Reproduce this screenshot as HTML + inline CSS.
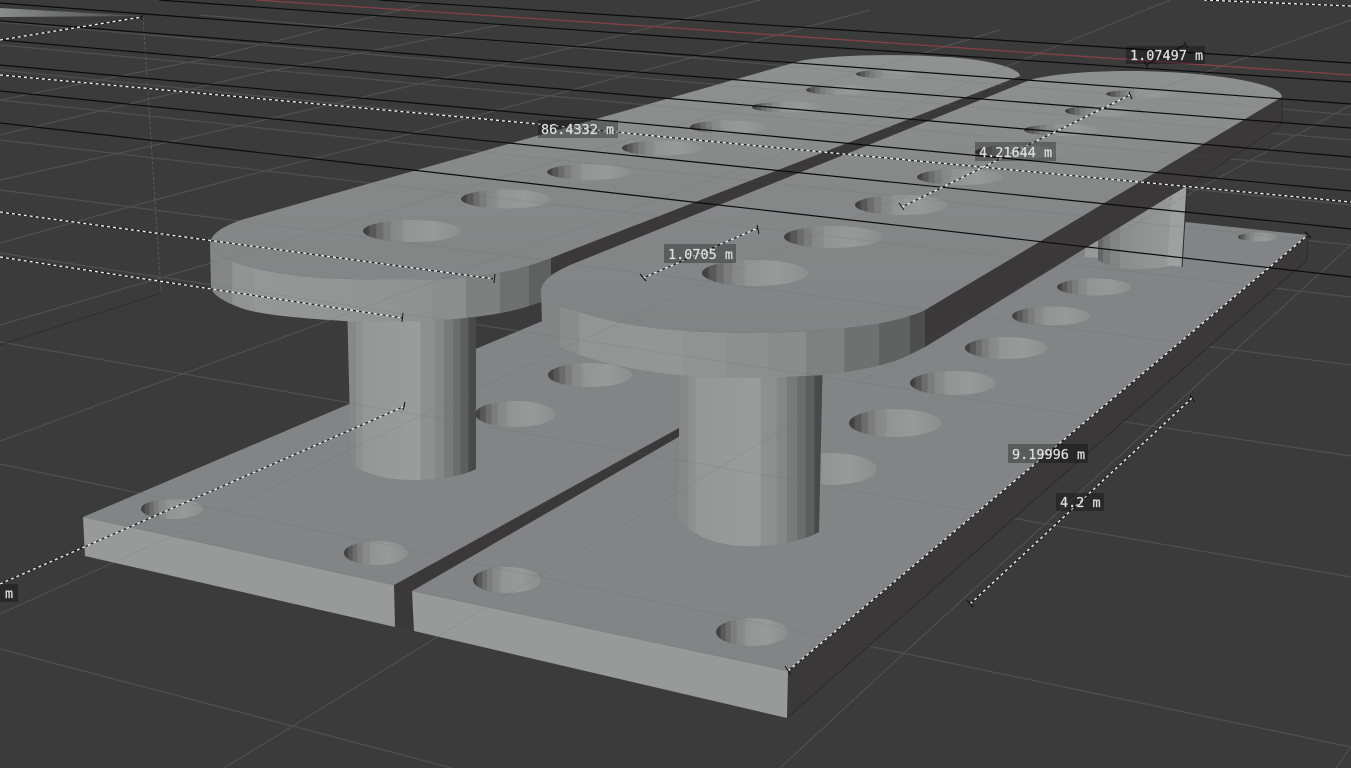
<!DOCTYPE html>
<html><head><meta charset="utf-8"><title>Viewport</title>
<style>html,body{margin:0;padding:0;background:#3b3b3b;width:1351px;height:768px;overflow:hidden}svg{display:block;filter:blur(.35px)}
text{font-family:"DejaVu Sans Mono","Liberation Mono",monospace;font-size:13.5px;fill:#dedede;stroke:#dedede;stroke-width:.25}</style></head>
<body>
<svg width="1351" height="768" viewBox="0 0 1351 768" xmlns="http://www.w3.org/2000/svg">
<defs>
<linearGradient id="hole" x1="0" x2="1" y1="0" y2="0">
<stop offset="0" stop-color="#3c3c3c"/><stop offset=".06" stop-color="#464646"/><stop offset=".07" stop-color="#585858"/><stop offset=".13" stop-color="#585858"/><stop offset=".14" stop-color="#6c6c6c"/><stop offset=".2" stop-color="#6c6c6c"/><stop offset=".21" stop-color="#7b7c7c"/><stop offset=".28" stop-color="#7b7c7c"/><stop offset=".29" stop-color="#868888"/><stop offset=".4" stop-color="#8a8c8c"/><stop offset=".41" stop-color="#929494"/><stop offset=".7" stop-color="#989a9a"/><stop offset="1" stop-color="#8d8f8f"/>
</linearGradient>
<linearGradient id="cyl" x1="0" x2="1" y1="0" y2="0">
<stop offset="0" stop-color="#868888"/><stop offset=".07" stop-color="#868888"/><stop offset=".071" stop-color="#8e9090"/><stop offset=".12" stop-color="#8e9090"/><stop offset=".121" stop-color="#959797"/><stop offset=".5" stop-color="#9a9c9c"/><stop offset=".57" stop-color="#9a9c9c"/><stop offset=".571" stop-color="#8e9090"/><stop offset=".68" stop-color="#8e9090"/><stop offset=".681" stop-color="#858787"/><stop offset=".75" stop-color="#858787"/><stop offset=".751" stop-color="#787a7a"/><stop offset=".82" stop-color="#787a7a"/><stop offset=".821" stop-color="#6c6d6d"/><stop offset=".88" stop-color="#6c6d6d"/><stop offset=".881" stop-color="#5d5e5e"/><stop offset=".94" stop-color="#5d5e5e"/><stop offset=".941" stop-color="#484949"/><stop offset="1" stop-color="#484949"/>
</linearGradient>
<linearGradient id="cylFar" x1="0" x2="1" y1="0" y2="0">
<stop offset="0" stop-color="#646565"/><stop offset=".07" stop-color="#646565"/><stop offset=".071" stop-color="#767777"/><stop offset=".16" stop-color="#767777"/><stop offset=".161" stop-color="#828484"/><stop offset=".3" stop-color="#828484"/><stop offset=".301" stop-color="#8b8d8d"/><stop offset=".7" stop-color="#929494"/><stop offset="1" stop-color="#979999"/>
</linearGradient>
<linearGradient id="sideL" gradientUnits="userSpaceOnUse" x1="210" x2="551" y1="0" y2="0">
<stop offset="0" stop-color="#858787"/><stop offset=".065" stop-color="#858787"/><stop offset=".066" stop-color="#929494"/><stop offset=".13" stop-color="#929494"/><stop offset=".131" stop-color="#959797"/><stop offset=".5" stop-color="#929494"/><stop offset=".65" stop-color="#8f9191"/><stop offset=".651" stop-color="#8c8e8e"/><stop offset=".75" stop-color="#8c8e8e"/><stop offset=".751" stop-color="#7e8080"/><stop offset=".85" stop-color="#7e8080"/><stop offset=".851" stop-color="#6f7070"/><stop offset=".935" stop-color="#6f7070"/><stop offset=".936" stop-color="#5f6060"/><stop offset="1" stop-color="#5f6060"/>
</linearGradient>
<linearGradient id="sideR" gradientUnits="userSpaceOnUse" x1="541" x2="925" y1="0" y2="0">
<stop offset="0" stop-color="#838585"/><stop offset=".05" stop-color="#838585"/><stop offset=".051" stop-color="#8b8d8d"/><stop offset=".1" stop-color="#8b8d8d"/><stop offset=".101" stop-color="#939595"/><stop offset=".37" stop-color="#949696"/><stop offset=".371" stop-color="#919393"/><stop offset=".48" stop-color="#919393"/><stop offset=".481" stop-color="#8e9090"/><stop offset=".59" stop-color="#8e9090"/><stop offset=".591" stop-color="#8b8d8d"/><stop offset=".69" stop-color="#8b8d8d"/><stop offset=".691" stop-color="#7f8181"/><stop offset=".79" stop-color="#7f8181"/><stop offset=".791" stop-color="#6f7070"/><stop offset=".88" stop-color="#6f7070"/><stop offset=".881" stop-color="#606161"/><stop offset=".96" stop-color="#606161"/><stop offset=".961" stop-color="#4c4d4d"/><stop offset="1" stop-color="#4c4d4d"/>
</linearGradient>
<linearGradient id="top" gradientUnits="userSpaceOnUse" x1="0" x2="0" y1="55" y2="330">
<stop offset="0" stop-color="#909292"/><stop offset=".5" stop-color="#868888"/><stop offset="1" stop-color="#818384"/>
</linearGradient>
<linearGradient id="sliver" x1="0" x2="1" y1="0" y2="0"><stop offset="0" stop-color="#8a8c8c"/><stop offset="1" stop-color="#4a4a4a"/></linearGradient>
<g id="grid" fill="none" stroke-width="1.2">
<path d="M0,649L452,768M0,464L1351,747M0,342L1351,577M0,253L1351,456M0,190L1351,365M0,140L1351,297M0,100L1351,245M0,70L1351,205M0,45L1351,170M0,22L1351,140M200,15L1351,115"/>
<path d="M224,768L293,726L486,607L675,494L1000,298L1351,105M0,614L172,536L430,411L700,285L1100,110L1351,20M780,768L903,654L1198,384L1351,245M0,441L155,384L330,320L560,235L900,110L1170,0M0,325L211,263L560,160L800,90L1000,30M0,243L129,207L241,177L387,140L560,93L870,10M0,180L200,135L534,57L760,0M0,135L250,75L500,25M0,100L200,60L420,5M1336,768L1351,747"/>
</g>
</defs>
<rect width="1351" height="768" fill="#3b3b3b"/>
<use href="#grid" stroke="#4d4d4d"/>
<path d="M0,8L143,16L0,17Z" fill="url(#sliver)"/>
<path d="M143,17L161,293" stroke="#5a5a5a" stroke-width="1" stroke-dasharray="3 2" fill="none"/>
<path d="M161,293L0,345" stroke="#2f2f2f" stroke-width="1" fill="none"/>

<!-- plates -->
<polygon points="788,671 1308,235 1307,260 787,718" fill="#3a3839"/>
<path d="M1308,235L1307,260L787,718" fill="none" stroke="#2b2b2b" stroke-width="1"/>
<polygon points="394,585 690,422 690,434 412,591 414,631 395,627" fill="#3a3839"/>
<polygon points="83,517 394,585 395,627 85,556" fill="#979a99"/>
<polygon points="412,591 788,671 787,718 414,631" fill="#979a99"/>
<polygon points="83,517 394,585 690,422 690,300 600,297 473,350 349,404" fill="#828485"/>
<polygon points="412,591 788,671 1308,235 1185,222 1071,210" fill="#828485"/>
<polygon points="1085,257 1085,248 1098,240 1098,258" fill="#979a99"/>
<g fill="url(#hole)">
<ellipse cx="172" cy="509" rx="31" ry="10"/><ellipse cx="376" cy="553" rx="32" ry="12"/>
<ellipse cx="515" cy="414" rx="40" ry="13"/><ellipse cx="590" cy="375" rx="42" ry="12"/>
<ellipse cx="507" cy="580" rx="34" ry="13"/><ellipse cx="752" cy="632" rx="36" ry="14"/>
<ellipse cx="1258" cy="237" rx="20" ry="4.5"/><ellipse cx="1094" cy="287" rx="37" ry="8.5"/>
<ellipse cx="1051" cy="316" rx="39" ry="9.5"/><ellipse cx="1006" cy="348" rx="41" ry="11"/>
<ellipse cx="953" cy="383" rx="43" ry="12"/><ellipse cx="895" cy="423" rx="46" ry="14"/>
<ellipse cx="830" cy="469" rx="47" ry="16"/>
</g>

<!-- cylinders -->
<path d="M347,300L476,300L476,469C465,475 440,480 413,480C385,480 360,473 351,462Z" fill="url(#cyl)"/>
<path d="M680,350L823,350L819,532C805,540 780,546 748,546C715,546 690,535 678,517Z" fill="url(#cyl)"/>
<path d="M1098,230L1098,260C1105,265 1120,269 1133,269C1150,269 1160,268 1170,266L1172,190Z" fill="url(#cylFar)"/>
<polygon points="1172,195 1187,186 1182,267 1167,265" fill="#9fa1a0"/>
<path d="M1187,186L1182,267" stroke="#2b2b2b" stroke-width="1" fill="none"/>

<!-- left disc -->
<polygon points="551,258 1020,78 1020,95 551,300" fill="#3a3839"/>
<path d="M210,243C212,258 250,270 300,276C340,280 400,280 440,279C490,277 520,270 551,258L551,300L541,302C520,310 490,317 440,320C400,322 370,322 344,321C300,318 260,315 241,308C225,302 212,295 211,287Z" fill="url(#sideL)"/>
<path d="M210,243C212,232 225,226 241,220L800,61C830,55 900,53 960,58C1000,62 1020,70 1020,76L551,258C520,270 490,277 440,279C400,280 340,280 300,276C250,270 212,258 210,243Z" fill="url(#top)"/>
<!-- right disc -->
<polygon points="925,310 1282,97 1282,127 925,347" fill="#3a3839"/>
<path d="M1282,97L1282,124L1187,187" stroke="#2e2e2e" stroke-width="1" fill="none"/>
<path d="M541,290C541,300 565,309 600,318C650,332 720,334 790,332C850,330 900,322 925,310L925,347L907,356C890,364 870,368 847,372C830,375 815,376 800,376C770,378 750,378 730,378C700,378 690,376 680,375C660,373 645,371 630,368C610,364 595,360 580,355C565,350 556,345 550,338C545,332 543,328 542,323Z" fill="url(#sideR)"/>
<path d="M541,290C543,278 558,270 575,263L1030,80C1050,74 1090,71 1130,71C1200,71 1282,82 1282,97L925,310C900,322 850,330 790,332C720,334 650,332 600,318C565,309 541,300 541,290Z" fill="url(#top)"/>
<g fill="url(#hole)">
<ellipse cx="412" cy="231" rx="49" ry="11"/><ellipse cx="506" cy="199" rx="45" ry="9.5"/>
<ellipse cx="589" cy="172" rx="42" ry="8"/><ellipse cx="662" cy="148" rx="40" ry="7.5"/>
<ellipse cx="728" cy="127" rx="38" ry="6.5"/><ellipse cx="787" cy="107" rx="35" ry="5.5"/>
<ellipse cx="840" cy="90" rx="34" ry="5"/><ellipse cx="889" cy="74" rx="33" ry="4.5"/>
<ellipse cx="755" cy="273" rx="53" ry="13"/><ellipse cx="833" cy="237" rx="49" ry="11"/>
<ellipse cx="901" cy="205" rx="46" ry="10"/><ellipse cx="960" cy="177" rx="43" ry="8"/>
<ellipse cx="1017" cy="152" rx="42" ry="7"/><ellipse cx="1062" cy="130" rx="38" ry="6"/>
<ellipse cx="1100" cy="111" rx="35" ry="5.5"/><ellipse cx="1141" cy="94" rx="35" ry="4.5"/>
</g>

<!-- faint grid over objects -->
<use href="#grid" stroke="#5c5e5f" opacity=".12"/>

<!-- red axis + black lines -->
<path d="M256,0L675,28L1351,75" stroke="#86404a" stroke-width="1.3" fill="none"/>
<g stroke="#0c0c0c" stroke-width="1.2" fill="none">
<path d="M379,0L675,19L1351,63"/><path d="M159,0L675,37L1351,82"/><path d="M0,3L675,54L1351,104"/>
<path d="M0,21L675,75L1351,128"/><path d="M0,40L675,99L1351,157"/><path d="M0,65L675,127L1351,191"/>
<path d="M0,91L675,160L1351,229"/><path d="M0,123L675,200L1351,277"/>
</g>

<!-- dashed dimension lines -->
<g fill="none" stroke="#111" stroke-width="1.2" opacity=".85">
<path d="M0,40L142,17M0,75L538,124L675,138L1351,202M0,212L495,279M0,257L403,318M0,584L405,406M643,278L758,228M902,207L1130,95M788,671L1308,235M970,604L1192,398M1204,0L1351,6M1146,65L1185,45"/>
</g>
<g fill="none" stroke="#f2f2f2" stroke-width="1.3" stroke-dasharray="3 3">
<path d="M0,40L142,17M0,75L538,124L675,138L1351,202M0,212L495,279M0,257L403,318M0,584L405,406M643,278L758,228M902,207L1130,95M788,671L1308,235M970,604L1192,398M1204,0L1351,6"/>
</g>
<g fill="none" stroke="#111" stroke-width="1">
<path d="M142,13V20M495,274L494,283M403,313L402,322M405,402L403,410M640,274L646,281M757,225L759,234M899,203L904,210M1129,92L1132,99M785,666L791,675M1305,232L1311,238M967,600L973,607M1190,395L1195,402M1144,61L1148,68M1184,42L1188,48"/>
</g>

<!-- labels -->
<g fill="#000" fill-opacity=".3">
<rect x="538" y="120" width="80" height="18"/>
<rect x="1126" y="46" width="79" height="18"/>
<rect x="975" y="142" width="81" height="19"/>
<rect x="664" y="244" width="72" height="19"/>
<rect x="1008" y="444" width="80" height="19"/>
<rect x="1056" y="493" width="48" height="18"/>
<rect x="0" y="584" width="18" height="18"/>
</g>
<text x="541" y="134">86.4332 m</text>
<text x="1130" y="60">1.07497 m</text>
<text x="979" y="157">4.21644 m</text>
<text x="668" y="259">1.0705 m</text>
<text x="1012" y="459">9.19996 m</text>
<text x="1060" y="507">4.2 m</text>
<text x="5" y="598">m</text>
</svg>
</body></html>
